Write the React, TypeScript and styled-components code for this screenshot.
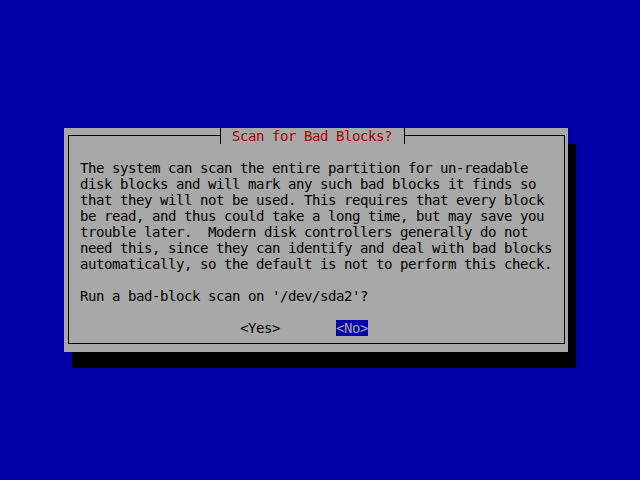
import React from "react";
import styled, { createGlobalStyle } from "styled-components";

const Global = createGlobalStyle`
  html, body {
    margin: 0;
    padding: 0;
    background: #0000a8;
    width: 640px;
    height: 480px;
    overflow: hidden;
  }
  #root {
    width: 640px;
    height: 480px;
  }
`;

const Screen = styled.div`
  width: 640px;
  height: 480px;
  background: #0000a8;
  padding: 128px 0 0 64px;
  box-sizing: border-box;
  font-family: "DejaVu Sans Mono", "Liberation Mono", monospace;
  font-size: 14px;
  letter-spacing: -0.428px;
  line-height: 16px;
  color: #000;
`;

const Window = styled.div`
  width: 504px;
  height: 224px;
  box-sizing: border-box;
  background: #a8a8a8;
  box-shadow: 8px 16px 0 #000;
  padding: 7px 3px 8px 4px;
  display: flex;
`;

const Frame = styled.div`
  position: relative;
  flex: 1;
  border: 1px solid #000;
  padding: 24px 0 7px 11px;
  display: flex;
  flex-direction: column;
`;

const Title = styled.div`
  position: absolute;
  left: 151px;
  top: -8px;
  height: 16px;
  width: 160px;
  padding: 0 12px 0 11px;
  border-left: 1px solid #000;
  border-right: 1px solid #000;
  background: #a8a8a8;
  color: #a80000;
  white-space: pre;
`;

const Line = styled.div`
  height: 16px;
  white-space: pre;
`;

const Buttons = styled.div`
  display: flex;
  gap: 56px;
  padding-left: 160px;
  height: 16px;
`;

const Button = styled.span<{ $active?: boolean }>`
  white-space: pre;
  height: 16px;
  background: ${(p) => (p.$active ? "#0000a8" : "transparent")};
  color: ${(p) => (p.$active ? "#a8a8a8" : "#000")};
`;

const lines = [
  "The system can scan the entire partition for un-readable",
  "disk blocks and will mark any such bad blocks it finds so",
  "that they will not be used. This requires that every block",
  "be read, and thus could take a long time, but may save you",
  "trouble later.  Modern disk controllers generally do not",
  "need this, since they can identify and deal with bad blocks",
  "automatically, so the default is not to perform this check.",
  "",
  "Run a bad-block scan on '/dev/sda2'?",
  "",
];

export default function App() {
  return (
    <>
      <Global />
      <Screen>
        <Window>
          <Frame>
            <Title>Scan for Bad Blocks?</Title>
            {lines.map((l, i) => (
              <Line key={i}>{l}</Line>
            ))}
            <Buttons>
              <Button>&lt;Yes&gt;</Button>
              <Button $active>&lt;No&gt;</Button>
            </Buttons>
          </Frame>
        </Window>
      </Screen>
    </>
  );
}
